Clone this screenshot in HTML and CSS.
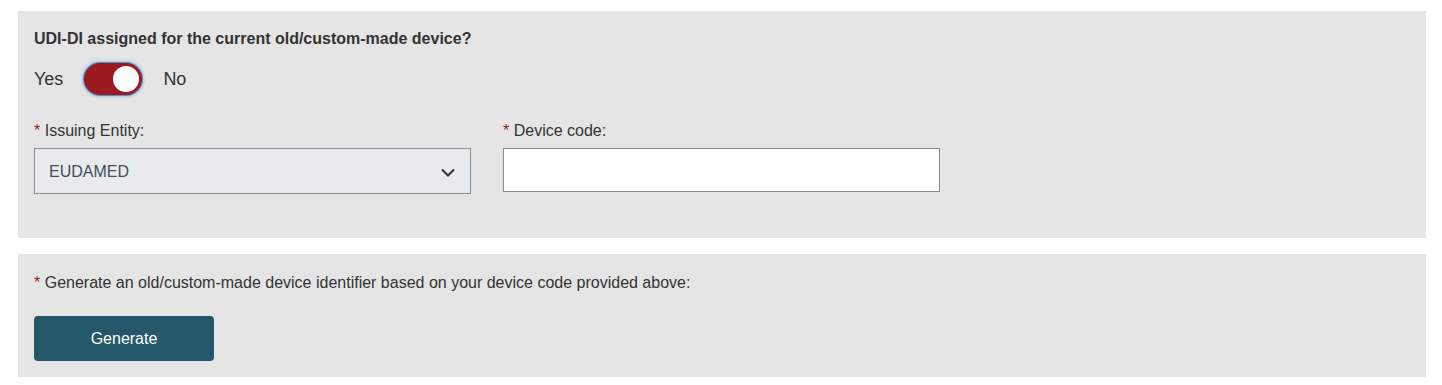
FILE: index.html
```html
<!DOCTYPE html>
<html lang="en">
<head>
<meta charset="utf-8">
<title>UDI-DI</title>
<link rel="stylesheet" href="styles.css">
</head>
<body>
<div class="page">
  <section class="panel panel-top">
    <div class="question">UDI-DI assigned for the current old/custom-made device?</div>
    <div class="toggle-row">
      <span class="toggle-label">Yes</span>
      <span class="toggle"><span class="knob"></span></span>
      <span class="toggle-label">No</span>
    </div>
    <div class="fields">
      <div class="field">
        <div class="label"><span class="req">*</span> Issuing Entity:</div>
        <div class="select">
          <span class="select-value">EUDAMED</span>
          <svg class="chevron" width="14" height="9" viewBox="0 0 14 9"><path d="M1 1.5 L7 7.5 L13 1.5" fill="none" stroke="#333" stroke-width="2"/></svg>
        </div>
      </div>
      <div class="field">
        <div class="label"><span class="req">*</span> Device code:</div>
        <div class="input"></div>
      </div>
    </div>
  </section>
  <section class="panel panel-bottom">
    <div class="label"><span class="req">*</span> Generate an old/custom-made device identifier based on your device code provided above:</div>
    <button class="btn">Generate</button>
  </section>
</div>
</body>
</html>
```
FILE: styles.css
```css
html, body {
  margin: 0;
  padding: 0;
  background: #ffffff;
}
body {
  font-family: "Liberation Sans", Arial, sans-serif;
  font-size: 16px;
  color: #333333;
}
.page {
  padding: 11px 16px 0 18px;
  display: flex;
  flex-direction: column;
  gap: 16px;
}
.panel {
  background: #e5e5e5;
  padding: 18px 16px 0 16px;
}
.panel-top {
  height: 209px;
}
.panel-bottom {
  height: 104px;
  padding-top: 19px;
}
.question {
  font-weight: bold;
  line-height: 20px;
  color: #333333;
}
.toggle-row {
  margin-top: 13px;
  height: 34px;
  display: flex;
  align-items: center;
  gap: 21px;
}
.toggle-label {
  font-size: 18px;
  color: #333333;
}
.toggle {
  position: relative;
  width: 58px;
  height: 32px;
  border-radius: 16px;
  background: #9b1a1f;
  box-shadow: 0 0 0 1px #4f8fd0, 0 0 3px 2px rgba(120, 170, 225, 0.55);
  flex: none;
}
.knob {
  position: absolute;
  top: 3px;
  right: 3px;
  width: 26px;
  height: 26px;
  border-radius: 50%;
  background: #ffffff;
}
.fields {
  margin-top: 25px;
  display: flex;
  gap: 32px;
}
.field {
  display: flex;
  flex-direction: column;
  gap: 7px;
}
.label {
  line-height: 20px;
  color: #333333;
}
.req {
  color: #9b1a1f;
}
.select {
  box-sizing: border-box;
  width: 437px;
  height: 46px;
  background: #e8ebee;
  border: 1px solid #8c8c8c;
  display: flex;
  align-items: center;
  justify-content: space-between;
  padding: 2px 15px 0 14px;
}
.select-value {
  color: #434d58;
  font-size: 16px;
}
.chevron {
  display: block;
}
.input {
  box-sizing: border-box;
  width: 437px;
  height: 44px;
  background: #ffffff;
  border: 1px solid #8c8c8c;
}
.btn {
  display: block;
  margin-top: 23px;
  width: 180px;
  height: 45px;
  border: none;
  border-radius: 4px;
  background: #245769;
  color: #ffffff;
  font-family: "Liberation Sans", Arial, sans-serif;
  font-size: 16px;
  padding: 0;
}
```
